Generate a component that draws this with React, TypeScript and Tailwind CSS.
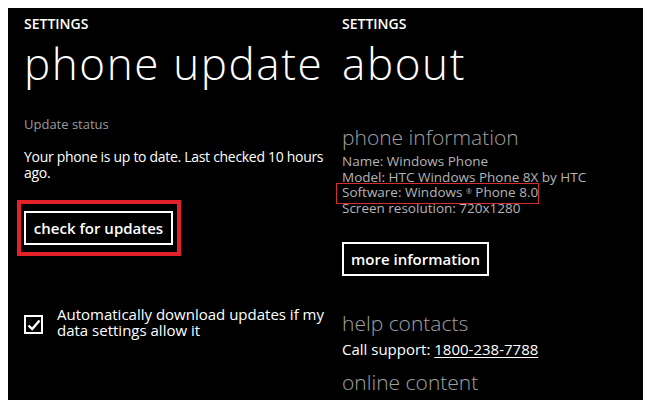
import React from "react";

const font = { fontFamily: '"Open Sans", "Noto Sans", sans-serif' };

export default function App() {
  return (
    <div className="w-[652px] h-[400px] bg-white pl-[8px] pt-[8px] pr-[9px] overflow-hidden" style={font}>
      <div className="flex h-[392px] bg-black text-white">
        {/* left column */}
        <div className="w-[322px] pl-[16px] flex flex-col">
          <div className="mt-[7px] text-[14px] leading-[18px] font-semibold">SETTINGS</div>
          <div className="mt-[6px] text-[44px] leading-[48px] font-light tracking-[1.6px] whitespace-nowrap">phone update</div>
          <div className="mt-[29px] text-[13px] leading-[16px] text-[#9a9a9a]">Update status</div>
          <div className="mt-[17px] text-[14px] leading-[16px] tracking-[-0.3px] w-[304px]">
            Your phone is up to date. Last checked 10 hours ago.
          </div>
          <div className="mt-[19px] -ml-[7px] w-[164px] h-[56px] border-[4px] border-[#e3212b] flex items-center pl-[3px]">
            <div className="w-[149px] h-[34px] border-2 border-white flex items-center justify-center text-[15px] font-semibold">
              check for updates
            </div>
          </div>
          <div className="mt-[50px] flex items-start gap-[14px]">
            <div className="mt-[9px] w-[19px] h-[19px] border-2 border-white flex items-center justify-center shrink-0">
              <svg width="14" height="12" viewBox="0 0 14 12">
                <path d="M1.5 6.5 L5.2 10 L12.5 1.5" stroke="white" strokeWidth="2.4" fill="none" />
              </svg>
            </div>
            <div className="text-[15px] leading-[16px] w-[270px]">
              Automatically download updates if my data settings allow it
            </div>
          </div>
        </div>
        {/* right column */}
        <div className="w-[313px] pl-[12px] flex flex-col">
          <div className="mt-[7px] text-[14px] leading-[18px] font-semibold">SETTINGS</div>
          <div className="mt-[6px] text-[44px] leading-[48px] font-light tracking-[1.6px]">about</div>
          <div className="mt-[38px] text-[21px] leading-[24px] font-light text-[#a0a0a0]">phone information</div>
          <div className="mt-[5px] text-[13.5px] leading-[15.5px] text-[#b4b4b4]">
            <div>Name: Windows Phone</div>
            <div>Model: HTC Windows Phone 8X by HTC</div>
            <div className="relative">
              Software: Windows <sup className="text-[7px]">®</sup> Phone 8.0
              <div className="absolute left-[-6px] top-[-2px] w-[203px] h-[21px] border border-[#d32f2f]" />
            </div>
            <div>Screen resolution: 720x1280</div>
          </div>
          <div className="mt-[26px] w-[147px] h-[34px] border-2 border-white flex items-center justify-center text-[15px] font-semibold">
            more information
          </div>
          <div className="mt-[35px] text-[21px] leading-[24px] font-light text-[#a0a0a0]">help contacts</div>
          <div className="mt-[5px] text-[15px] leading-[18px]">
            Call support: <span className="underline underline-offset-2">1800-238-7788</span>
          </div>
          <div className="mt-[12px] text-[21px] leading-[24px] font-light text-[#a0a0a0]">online content</div>
        </div>
      </div>
    </div>
  );
}
